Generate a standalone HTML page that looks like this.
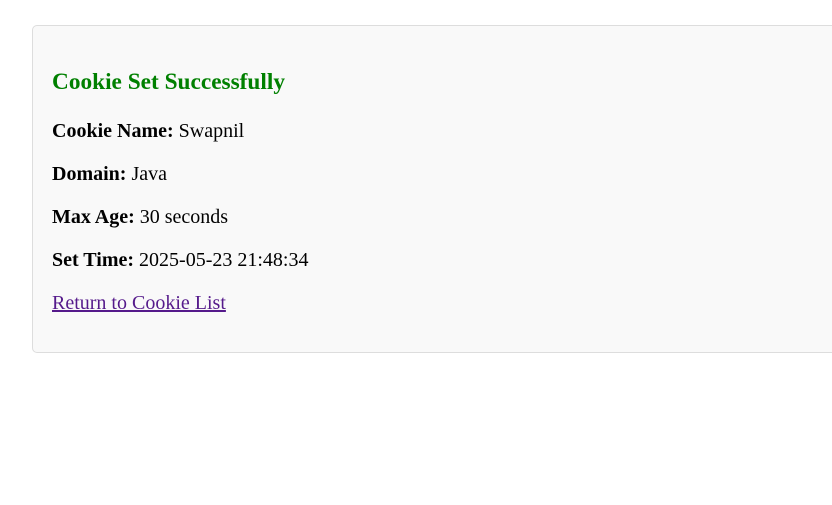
<!DOCTYPE html>
<html><head><meta charset="utf-8"><style>
body{margin:0;background:#fff;font-family:"Liberation Serif",serif;}
.box{position:absolute;left:32px;top:25px;width:820px;box-sizing:border-box;border:1px solid #ddd;border-radius:5px;background:#f9f9f9;padding:19px 19px 18px 19px;}
h2{color:green;font-size:23.3px;line-height:26px;margin:24px 0 24px;font-weight:bold;}
p{font-size:20px;line-height:25px;margin:18px 0;color:#000;}
a{color:#551a8b;font-size:20px;}
</style></head><body>
<div class="box">
<h2>Cookie Set Successfully</h2>
<p><b>Cookie Name:</b> Swapnil</p>
<p><b>Domain:</b> Java</p>
<p><b>Max Age:</b> 30 seconds</p>
<p><b>Set Time:</b> 2025-05-23 21:48:34</p>
<p><a href="#">Return to Cookie List</a></p>
</div>
</body></html>
